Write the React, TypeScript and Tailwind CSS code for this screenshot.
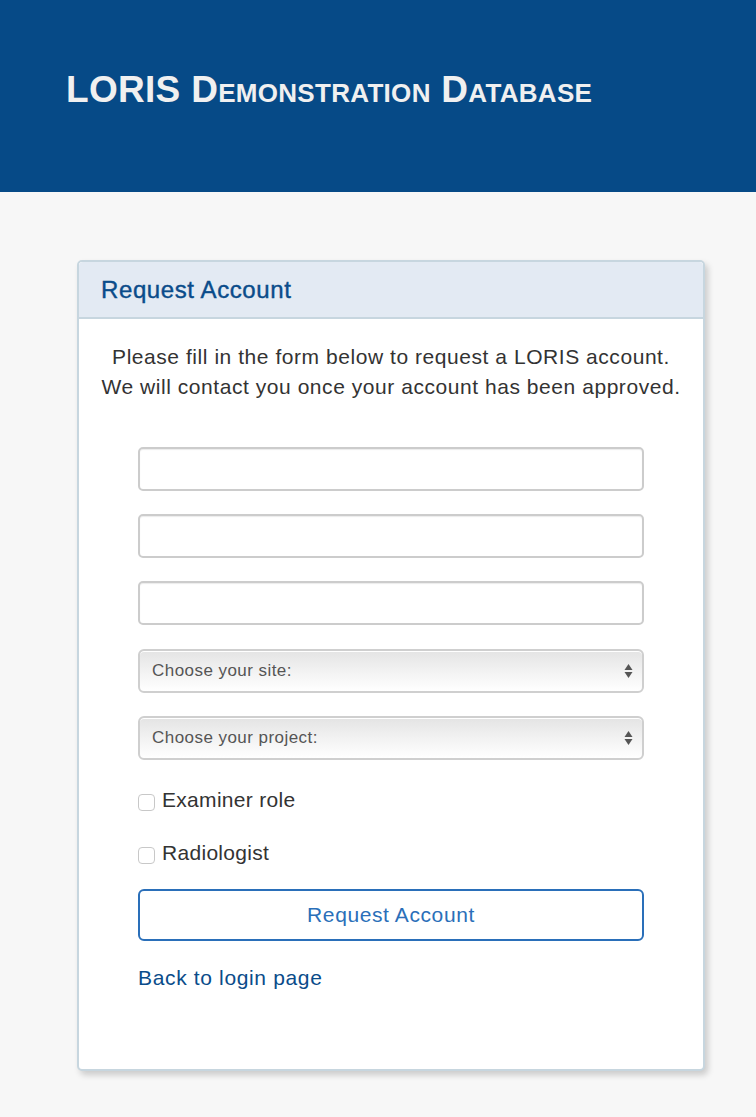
import React from "react";

const font = { fontFamily: '"Liberation Sans", Arial, sans-serif' };

function SelectBox({ label }: { label: string }) {
  return (
    <div className="relative h-[44px] w-full rounded-[6px] border-2 border-[#cfcfcf] bg-gradient-to-b from-[#e4e4e4] via-[#f2f2f2] to-white flex items-center pl-[12px] shadow-[inset_0_1px_0_#fff]">
      <span className="text-[17px] tracking-[0.45px] text-[#555]">{label}</span>
      <svg className="absolute right-[9px] top-1/2 -translate-y-1/2" width="9" height="16" viewBox="0 0 9 16">
        <path d="M4.5 1 L8.5 7 L0.5 7 Z" fill="#555" />
        <path d="M4.5 15 L8.5 9 L0.5 9 Z" fill="#555" />
      </svg>
    </div>
  );
}

function TextInput() {
  return (
    <div className="h-[44px] w-full rounded-[5px] border-2 border-[#cccccc] bg-white shadow-[inset_0_1px_1px_rgba(0,0,0,0.08)]" />
  );
}

function Check({ label }: { label: string }) {
  return (
    <div className="flex items-center h-[24px]">
      <div className="w-[17px] h-[17px] rounded-[4px] border border-[#c8c8c8] bg-white mt-[4px]" />
      <span className="ml-[7px] text-[21px] tracking-[0.3px] text-[#333] leading-[24px]">{label}</span>
    </div>
  );
}

export default function App() {
  return (
    <div className="min-h-[1117px] bg-[#f7f7f7]" style={font}>
      <div className="h-[192px] bg-[#064a87] flex items-center pl-[66px]">
        <h1 className="text-[37px] font-bold text-[#f0f0f0] leading-none [font-variant:small-caps] tracking-[0.3px] mt-[-14px]">
          LORIS Demonstration Database
        </h1>
      </div>
      <div className="pt-[68px] pl-[77px]">
        <div className="w-[628px] rounded-[5px] border-2 border-[#c7d6df] bg-white shadow-[3px_4px_6px_rgba(0,0,0,0.18)]">
          <div className="h-[57px] bg-[#e3eaf3] border-b-2 border-[#c7d6df] rounded-t-[4px] flex items-center pl-[22px]">
            <span className="text-[24px] tracking-[0.6px] text-[#0a4c8a] [-webkit-text-stroke:0.4px_#0a4c8a]">Request Account</span>
          </div>
          <div className="pt-[23px] pb-[79px]">
            <p className="text-center text-[21px] tracking-[0.55px] leading-[30px] text-[#333]">
              Please fill in the form below to request a LORIS account.
              <br />
              We will contact you once your account has been approved.
            </p>
            <div className="mx-auto w-[506px] mt-[45px] flex flex-col">
              <TextInput />
              <div className="mt-[23px]"><TextInput /></div>
              <div className="mt-[23px]"><TextInput /></div>
              <div className="mt-[24px]"><SelectBox label="Choose your site:" /></div>
              <div className="mt-[23px]"><SelectBox label="Choose your project:" /></div>
              <div className="mt-[28px]"><Check label="Examiner role" /></div>
              <div className="mt-[29px]"><Check label="Radiologist" /></div>
              <button className="mt-[24px] h-[52px] w-full rounded-[6px] border-2 border-[#2a6fb9] bg-white text-[21px] tracking-[0.6px] text-[#2a6fb9]">
                Request Account
              </button>
              <a className="mt-[25px] text-[21px] tracking-[0.65px] leading-[24px] text-[#0a4c8a] cursor-pointer">Back to login page</a>
            </div>
          </div>
        </div>
      </div>
    </div>
  );
}
